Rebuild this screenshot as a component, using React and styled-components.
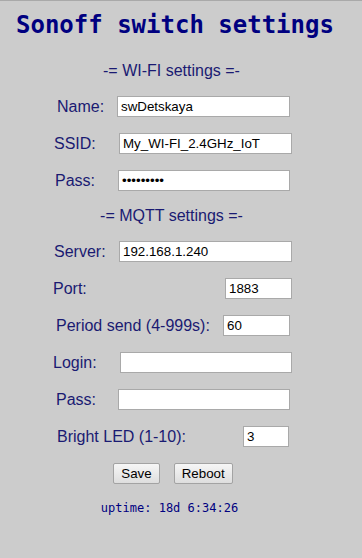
import React from 'react'
import styled, { createGlobalStyle } from 'styled-components'

const GlobalStyle = createGlobalStyle`
  html, body {
    margin: 0;
    padding: 0;
    background: #cccccc;
  }
  body {
    font-family: "Liberation Sans", Arial, sans-serif;
  }
`

const rows = [
  { section: 'wifi', label: 'Name:', left: 57, labelW: 60, width: 173, value: 'swDetskaya' },
  { section: 'wifi', label: 'SSID:', left: 54, labelW: 65, width: 173, value: 'My_WI-FI_2.4GHz_IoT' },
  { section: 'wifi', label: 'Pass:', left: 55, labelW: 63, width: 172, value: 'password1', type: 'password' },
  { section: 'mqtt', label: 'Server:', left: 54, labelW: 65, width: 173, value: '192.168.1.240' },
  { section: 'mqtt', label: 'Port:', left: 53, labelW: 172, width: 67, value: '1883' },
  { section: 'mqtt', label: 'Period send (4-999s):', left: 56, labelW: 167, width: 67, value: '60' },
  { section: 'mqtt', label: 'Login:', left: 53, labelW: 67, width: 172, value: '' },
  { section: 'mqtt', label: 'Pass:', left: 56, labelW: 62, width: 172, value: '', type: 'password' },
  { section: 'mqtt', label: 'Bright LED (1-10):', left: 57, labelW: 186, width: 46, value: '3' },
]

const App = () => {
  return (
    <>
      <GlobalStyle />
      <Page>
        <Column>
          <Title>Sonoff switch settings</Title>

          <Heading>-= WI-FI settings =-</Heading>
          {rows.filter(r => r.section === 'wifi').map((r, i) => (
            <Row key={i} $left={r.left}>
              <Label $w={r.labelW}>{r.label}</Label>
              <Field $w={r.width} type={r.type || 'text'} defaultValue={r.value} />
            </Row>
          ))}

          <Heading>-= MQTT settings =-</Heading>
          {rows.filter(r => r.section === 'mqtt').map((r, i) => (
            <Row key={i} $left={r.left}>
              <Label $w={r.labelW}>{r.label}</Label>
              <Field $w={r.width} type={r.type || 'text'} defaultValue={r.value} />
            </Row>
          ))}

          <Buttons>
            <Button type="button">Save</Button>
            <Button type="button">Reboot</Button>
          </Buttons>

          <Uptime>uptime: 18d 6:34:26</Uptime>
        </Column>
      </Page>
    </>
  )
}

export default App

const Page = styled.main`
  width: 100%;
  height: 558px;
  box-sizing: border-box;
  border-top: 1px solid #a9a9a9;
  padding-top: 10px;
`

const Column = styled.div`
  width: 343px;
  display: flex;
  flex-direction: column;
`

const Title = styled.h1`
  margin: 0 0 23px 0;
  padding-left: 16px;
  font-family: "DejaVu Sans Mono", monospace;
  font-weight: bold;
  font-size: 24px;
  line-height: 28px;
  color: #000080;
  white-space: nowrap;
`

const Heading = styled.div`
  text-align: center;
  font-size: 16px;
  line-height: 18px;
  color: #1a1a72;
  margin-bottom: 16px;
`

const Row = styled.div`
  display: flex;
  align-items: center;
  height: 21px;
  padding-left: ${p => p.$left}px;
  margin-bottom: 16px;
`

const Label = styled.span`
  width: ${p => p.$w}px;
  flex: none;
  font-size: 16px;
  color: #1a1a72;
  white-space: nowrap;
`

const Field = styled.input`
  width: ${p => p.$w}px;
  height: 21px;
  box-sizing: border-box;
  border: 1px solid #a9a9a9;
  background: #ffffff;
  padding: 1px 3px;
  font-family: "Liberation Sans", Arial, sans-serif;
  font-size: 13.33px;
  color: #000;
  outline: none;
`

const Buttons = styled.div`
  display: flex;
  justify-content: center;
  gap: 14px;
  padding-left: 3px;
  margin-bottom: 17px;
`

const Button = styled.button`
  height: 21px;
  padding: 0 7px;
  font-family: "Liberation Sans", Arial, sans-serif;
  font-size: 13.33px;
  color: #000;
  background: linear-gradient(#f6f6f6, #dedede);
  border: 1px solid #a3a3a3;
  border-radius: 2px;
`

const Uptime = styled.div`
  text-align: center;
  font-family: "DejaVu Sans Mono", monospace;
  font-size: 12px;
  color: #000080;
  padding-right: 4px;
`
